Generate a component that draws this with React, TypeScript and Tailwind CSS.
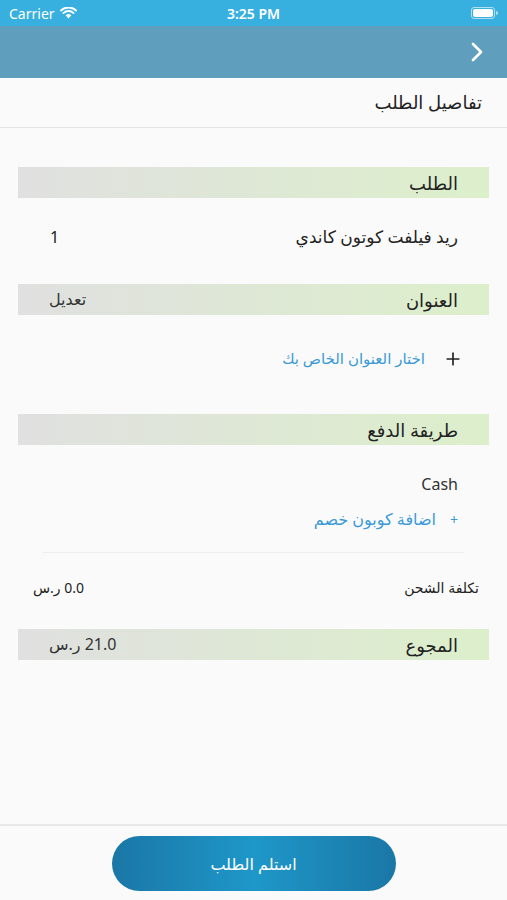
import { ChevronRight, Plus } from "lucide-react"

const font = { fontFamily: '"Noto Sans", "DejaVu Sans", sans-serif' }

const SectionBar = ({ title, left }: { title: string, left?: string }) => (
    <div className="mx-[18px] h-[31px] flex items-end justify-between pb-[2px] pr-[31px] pl-[31px] bg-linear-to-l from-[#dcefca] to-[#e0e0e0]">
        <span className="text-[18px] leading-[26px] text-[#222]">{title}</span>
        {left && <span className="text-[16px] leading-[26px] text-[#333] self-center">{left}</span>}
    </div>
)

const StatusBar = () => (
    <div className="h-[26px] bg-[#37b0e0] flex items-center justify-between px-[9px] text-white relative" dir="ltr">
        <div className="flex items-center gap-[5px]">
            <span className="text-[14px]">Carrier</span>
            <svg width="17" height="12" viewBox="0 0 17 12">
                <path d="M8.5 11.5 L5.6 8.3 A4.2 4.2 0 0 1 11.4 8.3 Z" fill="white" />
                <path d="M3.4 6.1 A7.3 7.3 0 0 1 13.6 6.1" stroke="white" strokeWidth="1.9" fill="none" strokeLinecap="round" />
                <path d="M1 3.5 A10.8 10.8 0 0 1 16 3.5" stroke="white" strokeWidth="1.9" fill="none" strokeLinecap="round" />
            </svg>
        </div>
        <span className="absolute left-1/2 -translate-x-1/2 text-[14px] font-semibold">3:25 PM</span>
        <div className="flex items-center">
            <div className="w-[24px] h-[12px] rounded-[3px] border border-white/60 p-[1px]">
                <div className="w-full h-full bg-white rounded-[2px]" />
            </div>
            <div className="w-[2px] h-[4px] bg-white/60 rounded-r-sm ml-[1px]" />
        </div>
    </div>
)

const App = () => {
    return (
        <div className="w-[507px] h-[900px] bg-[#fafafa] flex flex-col overflow-hidden" style={font}>
            <StatusBar />
            <div className="h-[52px] bg-[#5f9fbd] flex items-center justify-end pr-[14px]">
                <ChevronRight size={32} color="white" strokeWidth={2} />
            </div>
            <div dir="rtl" className="flex-1 flex flex-col">
                <div className="h-[50px] border-b border-[#e4e4e4] flex items-center pr-[25px]">
                    <span className="text-[18px] text-[#222]">تفاصيل الطلب</span>
                </div>

                <div className="mt-[39px]">
                    <SectionBar title="الطلب" />
                </div>
                <div className="h-[86px] flex items-center justify-between pr-[49px] pl-[50px] pb-[8px]">
                    <span className="text-[17px] text-[#222]">ريد فيلفت كوتون كاندي</span>
                    <span className="text-[16px] text-[#222]">1</span>
                </div>

                <SectionBar title="العنوان" left="تعديل" />
                <div className="h-[99px] flex items-center pr-[44px] gap-[18px] pb-[12px]">
                    <Plus size={20} color="#222" strokeWidth={2} />
                    <span className="text-[15px] text-[#3b9ad6]">اختار العنوان الخاص بك</span>
                </div>

                <SectionBar title="طريقة الدفع" />
                <div className="pr-[49px] mt-[27px] h-[24px] flex items-center">
                    <span className="text-[16px] text-[#333]" dir="ltr">Cash</span>
                </div>
                <div className="pr-[49px] mt-[11px] h-[24px] flex items-center gap-[14px]">
                    <span className="text-[14px] text-[#3b9ad6]">+</span>
                    <span className="text-[16px] text-[#3b9ad6]">اضافة كوبون خصم</span>
                </div>
                <div className="mx-[43px] mt-[21px] border-t border-[#eeeeee]" />
                <div className="h-[68px] flex items-center justify-between pr-[28px] pl-[33px]">
                    <span className="text-[14px] text-[#222]">تكلفة الشحن</span>
                    <span className="text-[14px] text-[#222]">0.0 ر.س</span>
                </div>
                <div className="mt-[8px]">
                    <SectionBar title="المجوع" left="21.0 ر.س" />
                </div>

                <div className="flex-1" />
                <div className="h-[76px] border-t-2 border-[#e8e8e8] flex justify-center pt-[10px]">
                    <button className="w-[284px] h-[55px] rounded-full bg-linear-to-r from-[#1a77a6] via-[#1e97c9] to-[#1a77a6] text-white text-[16px]">
                        استلم الطلب
                    </button>
                </div>
            </div>
        </div>
    )
}

export default App
